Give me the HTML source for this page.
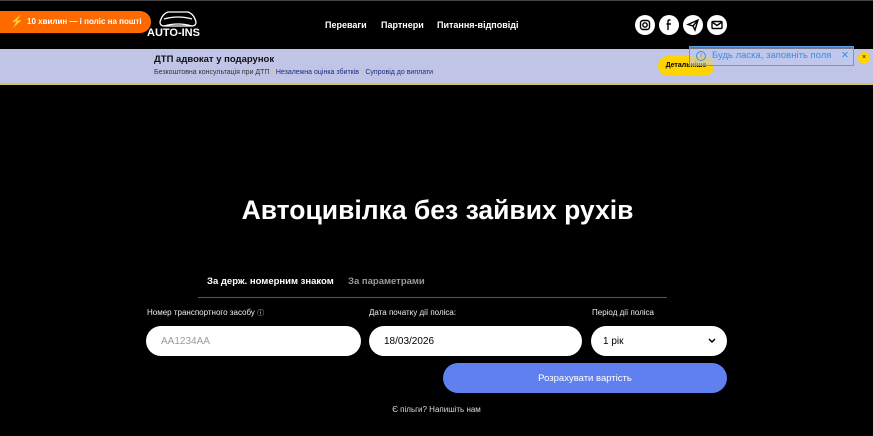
<!DOCTYPE html>
<html><head><meta charset="utf-8"><style>
*{margin:0;padding:0;box-sizing:border-box}
body{width:873px;height:436px;background:#000;font-family:"Liberation Sans","Noto Sans CJK SC",sans-serif;color:#fff;position:relative;overflow:hidden}
.abs{position:absolute}
.pill{left:0;top:11px;width:151px;height:22px;background:#ff6a00;border-radius:0 11px 11px 0;font-size:8px;font-weight:bold;line-height:22px;padding-left:27px;white-space:nowrap}
.nav{top:20px;font-size:9px;font-weight:bold;color:#fff}
.ic{top:15px;width:20px;height:20px;border-radius:50%;background:#fff}
.banner{left:0;top:49px;width:873px;height:36px;background:#c0c5e8;border-bottom:2px solid #d9c25a}
.inp{top:326px;height:30px;border-radius:15px;background:#fff;color:#000;font-size:10px;line-height:31px;padding-left:15px}
.lbl{top:308px;font-size:8px;color:#eee}
</style></head><body>
<div class="abs" style="left:0;top:0;width:873px;height:1px;background:#444"></div>
<div class="abs pill"><span style="position:absolute;left:10px;top:0;color:#ffd23f;font-size:11px">⚡</span>10 хвилин — і поліс на пошті</div>
<svg class="abs" style="left:156px;top:9px" width="44" height="20" viewBox="0 0 44 20" fill="none" stroke="#fff" stroke-width="1.3"><path d="M4 13 Q6 5 12 3 L32 3 Q38 5 40 13 Q40 17 36 17 L8 17 Q4 17 4 13Z"/><path d="M8 10 Q22 6 36 10"/><path d="M8 17 Q22 13 36 17"/></svg>
<div class="abs" style="left:147px;top:27px;font-size:11px;font-weight:bold">AUTO-INS</div>
<div class="abs nav" style="left:325px">Переваги</div>
<div class="abs nav" style="left:381px">Партнери</div>
<div class="abs nav" style="left:437px">Питання-відповіді</div>
<div class="abs ic" style="left:635px"><svg width="20" height="20" viewBox="0 0 20 20" fill="none" stroke="#000" stroke-width="1.4"><rect x="5.5" y="5.5" width="9" height="9" rx="2.5"/><circle cx="10" cy="10" r="2.2"/></svg></div>
<div class="abs ic" style="left:659px"><svg width="20" height="20" viewBox="0 0 20 20" fill="none" stroke="#000" stroke-width="1.4"><path d="M11.5 5 H10.5 Q9 5 9 6.5 V15 M7.5 9 H12"/></svg></div>
<div class="abs ic" style="left:683px"><svg width="20" height="20" viewBox="0 0 20 20" fill="none" stroke="#000" stroke-width="1.4"><path d="M5 9.5 L15 5 L12 15 L10 11 Z M10 11 L15 5"/></svg></div>
<div class="abs ic" style="left:707px"><svg width="20" height="20" viewBox="0 0 20 20" fill="none" stroke="#000" stroke-width="1.4"><rect x="5" y="6.5" width="10" height="7" rx="1"/><path d="M5 7 L10 10.5 L15 7"/></svg></div>
<div class="abs banner"></div>
<div class="abs" style="left:154px;top:54px;font-size:9.5px;font-weight:bold;color:#111">ДТП адвокат у подарунок</div>
<div class="abs" style="left:154px;top:69px;font-size:7px;color:#333;white-space:nowrap">Безкоштовна консультація при ДТП <span style="color:#e8c840">•</span> <span style="color:#1b2a7a">Незалежна оцінка збитків</span> <span style="color:#e8c840">•</span> <span style="color:#1b2a7a">Супровід до виплати</span></div>
<div class="abs" style="left:658px;top:56px;width:56px;height:20px;border-radius:10px;background:#ffd400;color:#000;font-size:7px;font-weight:bold;text-align:center;line-height:20px">Детальніше</div>
<div class="abs" style="left:689px;top:46px;width:165px;height:20px;border:1px solid #5aa0e0;background:rgba(190,200,240,0.6);font-size:9.5px;color:#3b8ee0;line-height:18px;padding-left:22px">Будь ласка, заповніть поля<span style="position:absolute;left:6px;top:4px;width:10px;height:10px;border:1px solid #3b8ee0;border-radius:50%;font-size:7px;line-height:8px;text-align:center">i</span><span style="position:absolute;right:4px;top:0">✕</span></div>
<div class="abs" style="left:858px;top:52px;width:12px;height:12px;border-radius:50%;background:#ffd400;color:#000;font-size:7px;text-align:center;line-height:12px">×</div>
<div class="abs" style="left:0;top:195px;width:873px;text-align:center;font-size:26.5px;font-weight:bold;padding-left:2px">Автоцивілка без зайвих рухів</div>
<div class="abs" style="left:207px;top:276px;font-size:9.5px;font-weight:bold">За держ. номерним знаком</div>
<div class="abs" style="left:348px;top:276px;font-size:9.5px;color:#999;font-weight:bold">За параметрами</div>
<div class="abs" style="left:198px;top:297px;width:469px;height:1px;background:#555"></div>
<div class="abs lbl" style="left:147px">Номер транспортного засобу <span style="font-size:7px">ⓘ</span></div>
<div class="abs lbl" style="left:369px">Дата початку дії поліса:</div>
<div class="abs lbl" style="left:592px">Період дії поліса</div>
<div class="abs inp" style="left:146px;width:215px;color:#999">AA1234AA</div>
<div class="abs inp" style="left:369px;width:213px">18/03/2026</div>
<div class="abs inp" style="left:591px;width:136px;padding-left:12px">1 рік<svg style="position:absolute;right:11px;top:12px" width="8" height="6" viewBox="0 0 8 6"><path d="M1 1 L4 4 L7 1" stroke="#000" stroke-width="1.5" fill="none"/></svg></div>
<div class="abs" style="left:443px;top:363px;width:284px;height:30px;border-radius:15px;background:#6080f0;font-size:9.5px;text-align:center;line-height:31px">Розрахувати вартість</div>
<div class="abs" style="left:0;top:405px;width:873px;text-align:center;font-size:8px;color:#ddd">Є пільги? Напишіть нам</div>
</body></html>
